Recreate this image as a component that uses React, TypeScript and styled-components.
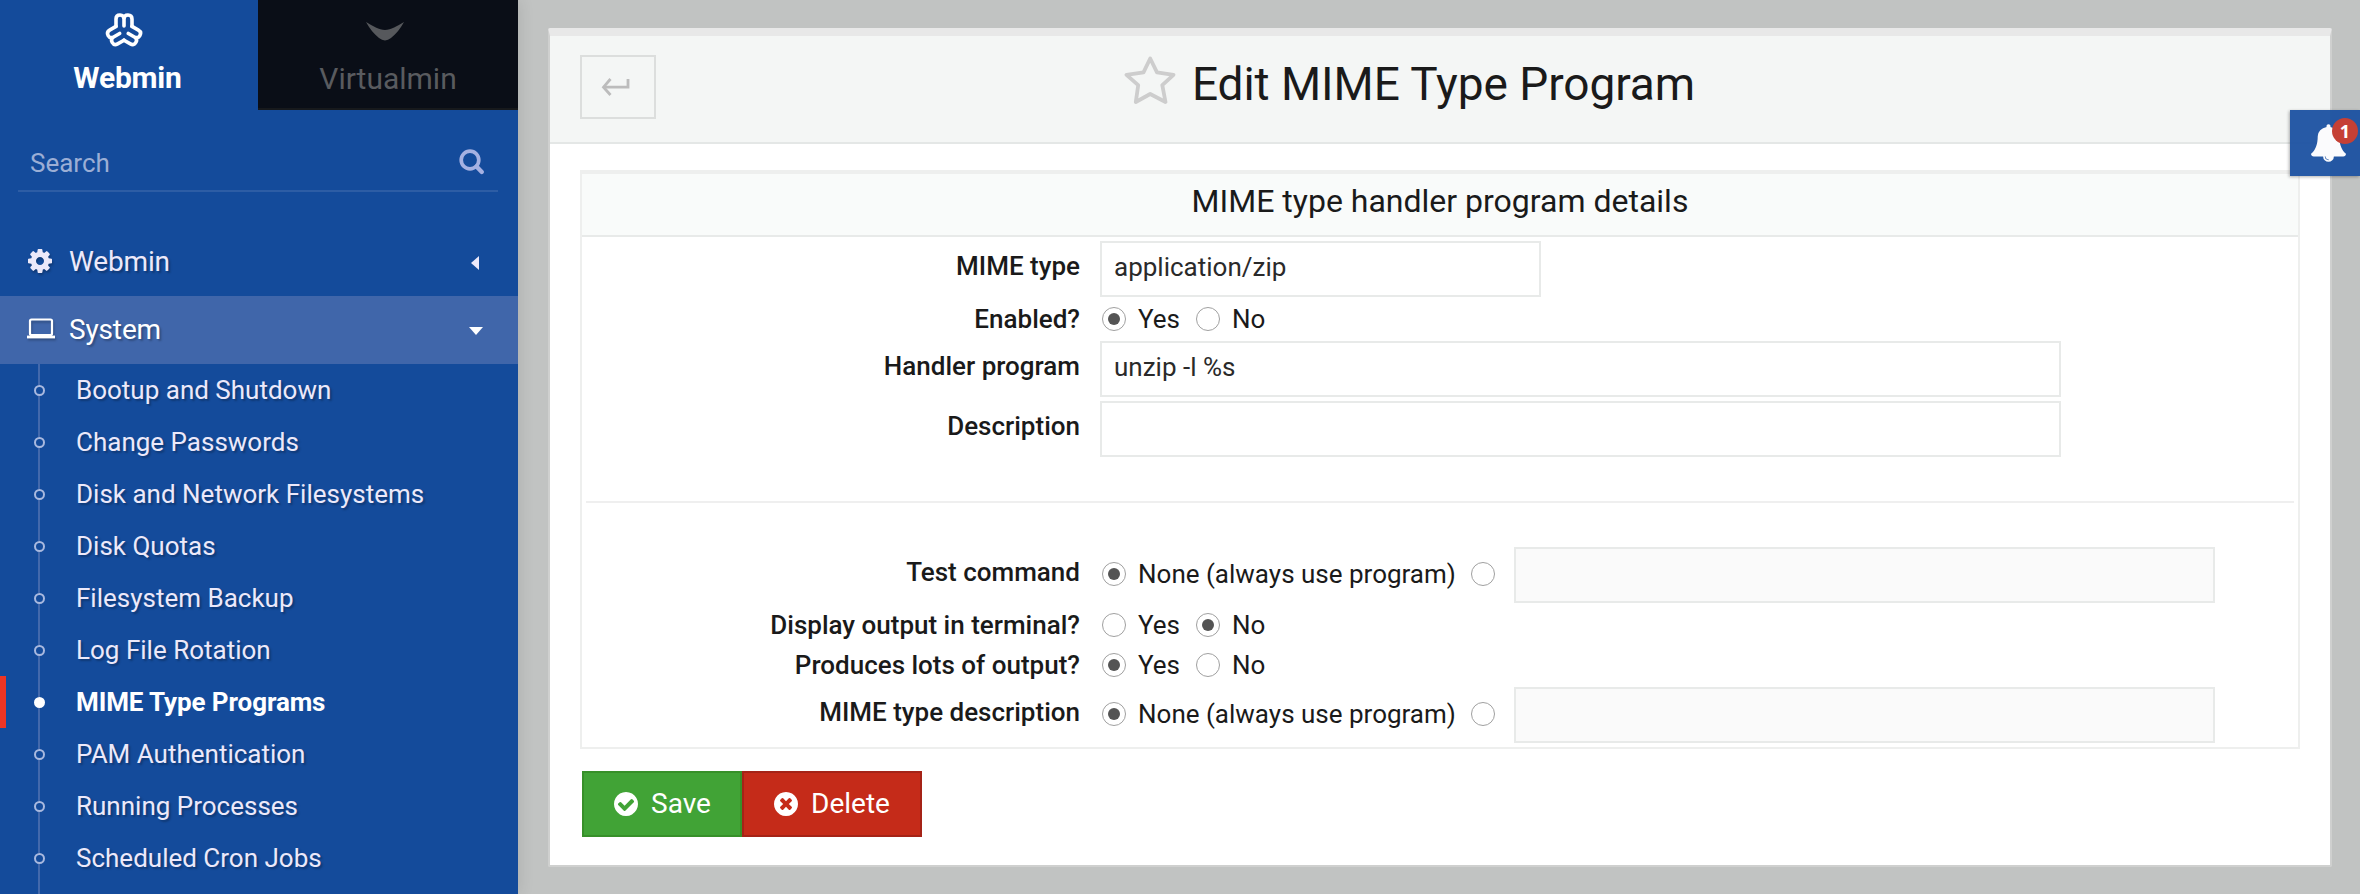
import React from "react";
import styled, { createGlobalStyle, css } from "styled-components";

const GlobalStyle = createGlobalStyle`
  * { box-sizing: border-box; }
  body {
    margin: 0;
    overflow: hidden;
    background: #c1c3c2;
    color: #1a1a1a;
    font-family: Roboto, "Liberation Sans", sans-serif;
    font-size: 26px;
  }
`;

const Page = styled.div`
  display: flex;
  width: 2360px;
  height: 894px;
  overflow: hidden;
`;

/* ---------- sidebar ---------- */

const Sidebar = styled.aside`
  flex: 0 0 518px;
  display: flex;
  flex-direction: column;
  background: #144b9b;
  box-shadow: 0 0 16px rgba(0, 0, 0, 0.12);
`;

const Tabs = styled.div`
  flex: 0 0 110px;
  display: grid;
  grid-template-columns: 258px 260px;
`;

const Tab = styled.div<{ $active?: boolean }>`
  display: flex;
  flex-direction: column;
  align-items: center;
  height: 110px;
  font-size: 30px;
  line-height: 36px;
  ${(p) =>
    p.$active
      ? css`
          color: #fff;
          font-weight: 700;
          letter-spacing: -0.2px;
          padding-right: 3px;
        `
      : css`
          color: #595b5f;
          background: #0a0e17;
          border-bottom: 2px solid #17191c;
        `}
`;

const TabIcon = styled.div`
  display: flex;
  justify-content: center;
  height: 60px;
  margin-right: 7px;
`;

const TabLabel = styled.span<{ $drop?: number }>`
  padding-top: ${(p) => p.$drop ?? 0}px;
`;

const SearchBox = styled.div`
  flex: 0 0 58px;
  display: flex;
  justify-content: space-between;
  align-items: center;
  margin: 24px 20px 36px 18px;
  padding: 0 13px 0 12px;
  border-bottom: 2px solid #2d5da5;
  color: #9baed5;
`;

const SearchHint = styled.span`
  padding-top: 2px;
`;

const SectionRow = styled.div<{ $open?: boolean }>`
  display: flex;
  align-items: center;
  flex: 0 0 68px;
  padding: 0 32px 2px 26px;
  font-size: 28px;
  letter-spacing: -0.15px;
  color: ${(p) => (p.$open ? "#ffffff" : "#ece9fa")};
  background: ${(p) => (p.$open ? "#4066aa" : "transparent")};
  text-shadow: 2px 2px 2px rgba(0, 0, 0, 0.25);
`;

const SectionIcon = styled.span`
  display: flex;
  width: 43px;
  svg {
    filter: drop-shadow(1px 2px 1px rgba(0, 0, 0, 0.25));
  }
`;

const SectionName = styled.span`
  flex: 1;
`;

const Caret = styled.span<{ $open?: boolean }>`
  display: flex;
  justify-content: center;
  width: 20px;
  padding-top: 4px;
  padding-right: ${(p) => (p.$open ? 0 : 2)}px;
`;

const SubList = styled.ul`
  list-style: none;
  margin: 0;
  padding: 0;
`;

const SubItem = styled.li<{ $active?: boolean }>`
  display: flex;
  align-items: center;
  height: 52px;
  border-left: 6px solid ${(p) => (p.$active ? "#ee3524" : "transparent")};
  color: ${(p) => (p.$active ? "#ffffff" : "#ece9fa")};
  font-weight: ${(p) => (p.$active ? 700 : 400)};
  letter-spacing: ${(p) => (p.$active ? -0.1 : 0)}px;
  text-shadow: ${(p) => (p.$active ? "none" : "2px 2px 2px rgba(0, 0, 0, 0.25)")};
`;

const Branch = styled.span`
  display: flex;
  flex-direction: column;
  align-items: center;
  width: 10px;
  height: 52px;
  margin: 0 32px 0 28px;
  &::before,
  &::after {
    content: "";
    flex: 1;
    width: 2px;
    background: #4369ac;
  }
`;

const Bullet = styled.i<{ $active?: boolean }>`
  flex: 0 0 11px;
  width: 11px;
  border-radius: 50%;
  border: 2px solid ${(p) => (p.$active ? "#fff" : "#a9b9df")};
  background: ${(p) => (p.$active ? "#fff" : "transparent")};
`;

/* ---------- content ---------- */

const Main = styled.main`
  flex: 1;
  padding: 28px 28px 27px 30px;
`;

const Panel = styled.section`
  height: 839px;
  background: #fff;
  background-clip: padding-box;
  border: 2px solid #cfd0cf;
  border-top: 8px solid #e8e8e8;
  border-radius: 2px;
`;

const PanelHeader = styled.header`
  display: grid;
  grid-template-columns: 76px 1fr 76px;
  height: 108px;
  padding: 19px 30px 0;
  background: #f4f6f5;
  border-bottom: 2px solid #e4e7e6;
`;

const BackButton = styled.button`
  display: flex;
  align-items: center;
  justify-content: center;
  width: 76px;
  height: 64px;
  padding: 0 4px 0 0;
  background: transparent;
  border: 2px solid #dcdedd;
`;

const TitleWrap = styled.div`
  display: flex;
  justify-content: center;
  align-items: flex-start;
  gap: 16px;
  padding-right: 61px;
`;

const Title = styled.h1`
  margin: 0;
  font-size: 46px;
  line-height: 58px;
  font-weight: 400;
  letter-spacing: -0.05px;
`;

const PanelBody = styled.div`
  padding: 26px 30px 0;
`;

const FormTable = styled.div`
  border: 2px solid #eeefee;
  border-top: 4px solid #eeefee;
`;

const Caption = styled.div`
  height: 63px;
  border-bottom: 2px solid #e8eae9;
  background: #f9fbfa;
  font-size: 32px;
  line-height: 54px;
  text-align: center;
`;

const FormBody = styled.div`
  padding: 2px 0;
`;

const FormRow = styled.div<{ $compact?: boolean }>`
  display: grid;
  grid-template-columns: 498px 1fr;
  column-gap: 20px;
  height: ${(p) => (p.$compact ? 40 : 60)}px;
`;

const RowLabel = styled.div<{ $compact?: boolean }>`
  font-weight: 500;
  text-align: right;
  line-height: ${(p) => (p.$compact ? 40 : 54)}px;
`;

const RowValue = styled.div`
  display: flex;
  align-items: center;
`;

const TextInput = styled.div<{ $width: number; $disabled?: boolean }>`
  width: ${(p) => p.$width}px;
  height: 56px;
  padding-left: 12px;
  line-height: 48px;
  color: #2a2a2a;
  border: 2px solid #e8eae9;
  background: ${(p) => (p.$disabled ? "#fafafa" : "#fff")};
`;

const Choice = styled.span<{ $gap?: number; $lift?: boolean }>`
  display: flex;
  align-items: center;
  gap: 12.5px;
  height: 40px;
  margin-right: ${(p) => p.$gap ?? 14}px;
  margin-bottom: ${(p) => (p.$lift ? 2 : 0)}px;
  padding-left: 1.5px;
  white-space: nowrap;
`;

const Radio = styled.i<{ $checked?: boolean }>`
  display: flex;
  align-items: center;
  justify-content: center;
  width: 24px;
  height: 24px;
  border: 1.5px solid #a0a0a0;
  border-radius: 50%;
  background: #fff;
  &::after {
    content: "";
    width: 12px;
    height: 12px;
    border-radius: 50%;
    background: ${(p) => (p.$checked ? "#545454" : "transparent")};
  }
`;

const Divider = styled.hr`
  height: 2px;
  margin: 42px 4px;
  border: 0;
  background: #efefef;
`;

const Actions = styled.div`
  display: flex;
  padding: 22px 0 0 2px;
`;

const ActionButton = styled.button<{ $tone: "save" | "delete" }>`
  display: flex;
  align-items: center;
  gap: 13px;
  width: ${(p) => (p.$tone === "save" ? 160 : 180)}px;
  height: 66px;
  padding: 0 0 0 30px;
  color: #fff;
  font: 400 28px Roboto, "Liberation Sans", sans-serif;
  background: ${(p) => (p.$tone === "save" ? "#41a336" : "#c52b19")};
  border: 2px solid ${(p) => (p.$tone === "save" ? "#379029" : "#a52317")};
`;

const ActionLabel = styled.span`
  padding-bottom: 2px;
`;

/* Slide-out notification handle, floats over the panel's edge */
const Notifier = styled.div`
  position: absolute;
  top: 110px;
  left: 2290px;
  width: 70px;
  height: 66px;
  padding: 14px 0 0 21px;
  background: rgba(26, 80, 160, 0.94);
  box-shadow: -1px 1px 3px rgba(0, 0, 0, 0.3);
`;

const Badge = styled.span`
  position: absolute;
  top: 8px;
  left: 42px;
  width: 26px;
  height: 26px;
  border-radius: 50%;
  background: #c54035;
  color: #fff;
  font: 700 18px/26px "Open Sans", sans-serif;
  text-align: center;
`;

/* ---------- icons ---------- */

const petal = "M-8 -4.6 V-12 Q-8 -16 -4 -16 Q0 -16 0 -12 V-5 M0 -12 Q0 -16 4 -16 Q8 -16 8 -12 V-4.6";

const WebminLogo = () => (
  <svg width="40" height="60" viewBox="0 0 40 60" fill="none" stroke="#fff" strokeWidth="3.6" strokeLinecap="round" strokeLinejoin="round">
    <g transform="translate(20 31)">
      {[0, 120, 240].map((a) => (
        <path key={a} d={petal} transform={`rotate(${a})`} />
      ))}
    </g>
  </svg>
);

const VirtualminLogo = () => (
  <svg width="40" height="60" viewBox="0 0 40 60" fill="#56585c">
    <path d="M1 22 C8 26 14 30 20 30 C26 30 32 26 39 22 C35 29 31 34 26 38 Q20 42.8 14 38 C9 34 5 29 1 22Z" />
  </svg>
);

const SearchIcon = () => (
  <svg width="26" height="28" viewBox="0 0 26 28" fill="none" stroke="#a5b1e2" strokeLinecap="round">
    <circle cx="11" cy="12" r="8.8" strokeWidth="3.7" />
    <path d="M17.5 18.5 L22.8 24" strokeWidth="4.4" />
  </svg>
);

const GearIcon = () => (
  <svg width="28" height="24" viewBox="-128 128 1792 1536" fill="#ece9fa" fillRule="evenodd">
    <path d="M1024 896q0-106-75-181t-181-75-181 75-75 181 75 181 181 75 181-75 75-181zm512-109v222q0 12-8 23t-20 13l-185 28q-19 54-39 91 35 50 107 138 10 12 10 25t-9 23q-27 37-99 108t-94 71q-12 0-26-9l-138-108q-44 23-91 38-16 136-29 186-7 28-36 28h-222q-14 0-24.500-8.500t-11.500-21.500l-28-184q-49-16-90-37l-141 107q-10 9-25 9-14 0-25-11-126-114-165-168-7-10-7-23 0-12 8-23 15-21 51-66.500t54-70.500q-27-50-41-99l-183-27q-13-2-21-12.500t-8-23.500v-222q0-12 8-23t19-13l186-28q14-46 39-92-40-57-107-138-10-12-10-24 0-10 9-23 26-36 98.500-107.500t94.500-71.500q13 0 26 10l138 107q44-23 91-38 16-136 29-186 7-28 36-28h222q14 0 24.500 8.500t11.500 21.500l28 184q49 16 90 37l142-107q9-9 24-9 13 0 25 10 129 119 165 170 7 8 7 22 0 12-8 23-15 21-51 66.500t-54 70.500q26 50 41 98l183 28q13 2 21 12.500t8 23.500z" />
  </svg>
);

const LaptopIcon = () => (
  <svg width="30" height="24" viewBox="0 0 30 24" fill="none" stroke="#fff" strokeWidth="2.2">
    <rect x="4" y="2.5" width="22" height="15.5" rx="1.5" />
    <rect x="1" y="18.6" width="28" height="2.8" fill="#fff" stroke="none" />
  </svg>
);

const ReturnIcon = () => (
  <svg width="30" height="20" viewBox="0 0 30 20" fill="none" stroke="#bcbcbc" strokeWidth="2.8">
    <path d="M27 2 V10.2 H3" />
    <path d="M9.5 2 L2.5 10.2 L9.5 18" />
  </svg>
);

const StarIcon = () => (
  <svg width="52" height="52" viewBox="0 0 52 52" fill="none" stroke="#cdcdcd" strokeWidth="3.8" strokeLinejoin="round">
    <path d="M26.2 3.5 L33 17.3 L49.5 19.8 L38.3 30.2 L41.5 47 L26.2 39 L11.8 47 L14.2 30.2 L2.5 19.8 L19.5 17.3 Z" />
  </svg>
);

const disc =
  "m0 0q0 209-103 385.500t-279.500 279.500-385.500 103-385.500-103-279.500-279.500-103-385.500 103-385.500 279.500-279.500 385.500-103 385.500 103 279.500 279.500 103 385.500z";

const CheckIcon = () => (
  <svg width="24" height="24" viewBox="128 128 1536 1536" fill="#fff">
    <path d={"M1412 734q0-28-18-46l-91-90q-19-19-45-19t-45 19l-408 407-226-226q-19-19-45-19t-45 19l-91 90q-18 18-18 46 0 27 18 45l362 362q19 19 45 19 27 0 46-19l543-543q18-18 18-45zm252 162" + disc} fillRule="evenodd" />
  </svg>
);

const CrossIcon = () => (
  <svg width="24" height="24" viewBox="128 128 1536 1536" fill="#fff">
    <path d={"M1277 1122q0-26-19-45l-181-181 181-181q19-19 19-45 0-27-19-46l-90-90q-19-19-46-19-26 0-45 19l-181 181-181-181q-19-19-45-19-27 0-46 19l-90 90q-19 19-19 46 0 26 19 45l181 181-181 181q-19 19-19 45 0 27 19 46l90 90q19 19 46 19 26 0 45-19l181-181 181 181q19 19 45 19 27 0 46-19l90-90q19-19 19-46zm387-226" + disc} fillRule="evenodd" />
  </svg>
);

const BellIcon = () => (
  <svg width="35" height="38" viewBox="64 0 1664 1792" fill="#fbfbfd">
    <path d="M912 1696q0-16-16-16-59 0-101.500-42.500t-42.500-101.500q0-16-16-16t-16 16q0 73 51.500 124.500t124.500 51.500q16 0 16-16zm816-288q0 52-38 90t-90 38h-448q0 106-75 181t-181 75-181-75-75-181h-448q-52 0-90-38t-38-90q50-42 91-88t85-119.500 74.500-158.500 50-206 19.500-260q0-152 117-282.500t307-158.500q-8-19-8-39 0-40 28-68t68-28 68 28 28 68q0 20-8 39 190 28 307 158.500t117 282.500q0 139 19.500 260t50 206 74.500 158.500 85 119.500 91 88z" />
  </svg>
);

const CaretLeft = () => (
  <svg width="8" height="14" viewBox="0 0 8 14" fill="#ece9fa"><path d="M8 0 V14 L0 7Z" /></svg>
);
const CaretDown = () => (
  <svg width="14" height="8" viewBox="0 0 14 8" fill="#fff"><path d="M0 0 H14 L7 8Z" /></svg>
);

/* ---------- data ---------- */

const modules = [
  "Bootup and Shutdown",
  "Change Passwords",
  "Disk and Network Filesystems",
  "Disk Quotas",
  "Filesystem Backup",
  "Log File Rotation",
  "MIME Type Programs",
  "PAM Authentication",
  "Running Processes",
  "Scheduled Cron Jobs",
];
const currentModule = "MIME Type Programs";

const TextRow = ({ label, value, width }: { label: string; value?: string; width: number }) => (
  <FormRow>
    <RowLabel>{label}</RowLabel>
    <RowValue>
      <TextInput $width={width}>{value}</TextInput>
    </RowValue>
  </FormRow>
);

const YesNoRow = ({ label, yes }: { label: string; yes: boolean }) => (
  <FormRow $compact>
    <RowLabel $compact>{label}</RowLabel>
    <RowValue>
      <Choice><Radio $checked={yes} />Yes</Choice>
      <Choice><Radio $checked={!yes} />No</Choice>
    </RowValue>
  </FormRow>
);

const OptionalRow = ({ label }: { label: string }) => (
  <FormRow>
    <RowLabel>{label}</RowLabel>
    <RowValue>
      <Choice $lift><Radio $checked />None (always use program)</Choice>
      <Choice $gap={18.5} $lift><Radio /></Choice>
      <TextInput $width={701} $disabled />
    </RowValue>
  </FormRow>
);

export default function App() {
  return (
    <Page>
      <GlobalStyle />
      <Sidebar>
        <Tabs>
          <Tab $active>
            <TabIcon><WebminLogo /></TabIcon>
            <TabLabel>Webmin</TabLabel>
          </Tab>
          <Tab>
            <TabIcon><VirtualminLogo /></TabIcon>
            <TabLabel $drop={1}>Virtualmin</TabLabel>
          </Tab>
        </Tabs>
        <SearchBox>
          <SearchHint>Search</SearchHint>
          <SearchIcon />
        </SearchBox>
        <SectionRow>
          <SectionIcon><GearIcon /></SectionIcon>
          <SectionName>Webmin</SectionName>
          <Caret><CaretLeft /></Caret>
        </SectionRow>
        <SectionRow $open>
          <SectionIcon><LaptopIcon /></SectionIcon>
          <SectionName>System</SectionName>
          <Caret $open><CaretDown /></Caret>
        </SectionRow>
        <SubList>
          {[...modules, ""].map((name) => (
            <SubItem key={name} $active={name === currentModule}>
              <Branch>{name && <Bullet $active={name === currentModule} />}</Branch>
              {name}
            </SubItem>
          ))}
        </SubList>
      </Sidebar>
      <Main>
        <Panel>
          <PanelHeader>
            <BackButton aria-label="Back"><ReturnIcon /></BackButton>
            <TitleWrap>
              <StarIcon />
              <Title>Edit MIME Type Program</Title>
            </TitleWrap>
          </PanelHeader>
          <PanelBody>
            <FormTable>
              <Caption>MIME type handler program details</Caption>
              <FormBody>
                <TextRow label="MIME type" value="application/zip" width={441} />
                <YesNoRow label="Enabled?" yes />
                <TextRow label="Handler program" value="unzip -l %s" width={961} />
                <TextRow label="Description" width={961} />
                <Divider />
                <OptionalRow label="Test command" />
                <YesNoRow label="Display output in terminal?" yes={false} />
                <YesNoRow label="Produces lots of output?" yes />
                <OptionalRow label="MIME type description" />
              </FormBody>
            </FormTable>
            <Actions>
              <ActionButton $tone="save"><CheckIcon /><ActionLabel>Save</ActionLabel></ActionButton>
              <ActionButton $tone="delete"><CrossIcon /><ActionLabel>Delete</ActionLabel></ActionButton>
            </Actions>
          </PanelBody>
        </Panel>
      </Main>
      <Notifier>
        <BellIcon />
        <Badge>1</Badge>
      </Notifier>
    </Page>
  );
}
